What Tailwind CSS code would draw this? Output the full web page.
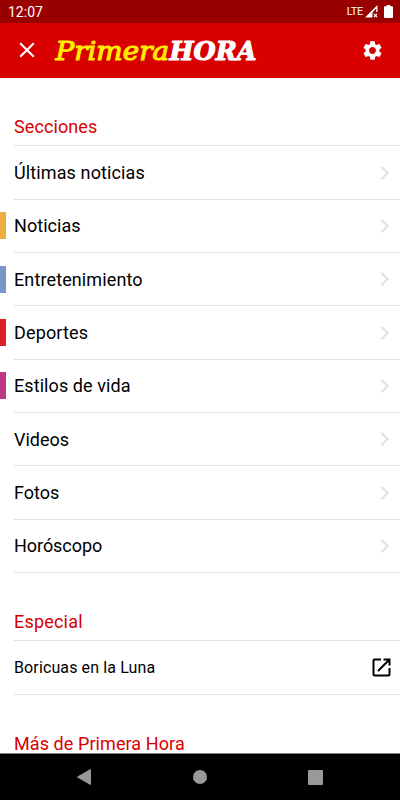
<!DOCTYPE html>
<html lang="es">
<head>
    <meta charset="UTF-8">
    <meta name="viewport" content="width=device-width, initial-scale=1.0">
    <title>Primera Hora - Menú</title>
    <script src="https://cdn.jsdelivr.net/npm/@tailwindcss/browser@4"></script>
</head>
<body class="bg-white font-['Roboto',sans-serif] text-black">
    <div class="w-[400px] h-[800px] flex flex-col overflow-hidden">
        <!-- Barra de estado -->
        <div class="h-[23px] shrink-0 bg-[#990000] text-white flex items-center justify-between pl-[8px] pr-[7px]">
            <span class="text-[14px] leading-[23px] pt-[2px]">12:07</span>
            <div class="flex items-center">
                <span class="text-[11px] leading-[22px] tracking-[-0.3px] mr-[2px]">LTE</span>
                <svg class="w-[13px] h-[13px] mr-[6px]" viewBox="0 0 13 13">
                    <path d="M0 12.5 12.5 0V7H11.2V3.4L7.5 7.4V12.5Z" fill="#fff"/>
                    <path d="M9 9l3 3.2M12 9l-3 3.2" stroke="#fff" stroke-width="1.1"/>
                </svg>
                <svg class="w-[9px] h-[13px]" viewBox="0 0 9 13">
                    <path d="M2.8 0h3.4v1.2H8q1 0 1 1V12q0 1-1 1H1q-1 0-1-1V2.2q0-1 1-1h1.8z" fill="#fff"/>
                </svg>
            </div>
        </div>

        <!-- Encabezado -->
        <header class="h-[54.5px] shrink-0 bg-[#d90000] flex items-center pl-[19px] pr-[16px]">
            <button class="w-[16px] h-[16px]">
                <svg class="w-[16px] h-[16px]" viewBox="0 0 16 16">
                    <path d="M1.2 1.2 14.8 14.8M14.8 1.2 1.2 14.8" stroke="#fff" stroke-width="2" fill="none"/>
                </svg>
            </button>
            <svg class="w-[204px] h-[30px] ml-[19px]" viewBox="0 0 204 30">
                <text x="1.5" y="24.8" font-size="26" font-style="italic" fill="#ffec00" stroke="#ffec00" stroke-width="1.1" textLength="113.5" lengthAdjust="spacingAndGlyphs" class="font-['DejaVu_Serif',serif]">Primera</text>
                <text x="115.5" y="24.8" font-size="26" font-style="italic" font-weight="700" fill="#fff" stroke="#fff" stroke-width="1.1" textLength="87" lengthAdjust="spacingAndGlyphs" class="font-['DejaVu_Serif',serif]">HORA</text>
            </svg>
            <button class="w-[23px] h-[23px] ml-auto">
                <svg class="w-[23px] h-[23px]" viewBox="0 0 24 24" fill="#fff">
                    <path d="M19.14 12.94c.04-.3.06-.61.06-.94 0-.32-.02-.64-.07-.94l2.03-1.58c.18-.14.23-.41.12-.61l-1.92-3.32c-.12-.22-.37-.29-.59-.22l-2.39.96c-.5-.38-1.03-.7-1.62-.94l-.36-2.54c-.04-.24-.24-.41-.48-.41h-3.84c-.24 0-.43.17-.47.41l-.36 2.54c-.59.24-1.13.57-1.62.94l-2.39-.96c-.22-.08-.47 0-.59.22L2.74 8.87c-.12.21-.08.47.12.61l2.03 1.58c-.05.3-.09.63-.09.94s.02.64.07.94l-2.03 1.58c-.18.14-.23.41-.12.61l1.92 3.32c.12.22.37.29.59.22l2.39-.96c.5.38 1.03.7 1.62.94l.36 2.54c.05.24.24.41.48.41h3.84c.24 0 .44-.17.47-.41l.36-2.54c.59-.24 1.13-.56 1.62-.94l2.39.96c.22.08.47 0 .59-.22l1.92-3.32c.12-.22.07-.47-.12-.61l-2.01-1.58zM12 15.6c-1.98 0-3.6-1.62-3.6-3.6s1.62-3.6 3.6-3.6 3.6 1.62 3.6 3.6-1.62 3.6-3.6 3.6z"/>
                </svg>
            </button>
        </header>

        <!-- Menú -->
        <main class="flex-1 min-h-0 overflow-hidden text-[18px]">
            <h2 class="h-[68.9px] ml-[14px] border-b border-[#e2e2e2] flex items-end pb-[5px] text-[#d90000] tracking-[0.1px]">Secciones</h2>
            <ul>
                <li class="h-[53.33px] flex items-center">
                    <span class="w-[6px] h-[27px] mr-[8px] mb-[1px]"></span>
                    <a class="flex-1 h-full border-b border-[#e2e2e2] flex items-center justify-between pr-[10px]">
                        <span class="tracking-[0.12px]">Últimas noticias</span>
                        <svg class="w-[10px] h-[14px]" viewBox="0 0 10 14"><path d="M1.5 1 7.7 7 1.5 13" stroke="#dedee0" stroke-width="1.8" fill="none"/></svg>
                    </a>
                </li>
                <li class="h-[53.33px] flex items-center">
                    <span class="w-[6px] h-[27px] mr-[8px] mb-[1px] bg-[#edae3f]"></span>
                    <a class="flex-1 h-full border-b border-[#e2e2e2] flex items-center justify-between pr-[10px]">
                        <span class="tracking-[0.05px]">Noticias</span>
                        <svg class="w-[10px] h-[14px]" viewBox="0 0 10 14"><path d="M1.5 1 7.7 7 1.5 13" stroke="#dedee0" stroke-width="1.8" fill="none"/></svg>
                    </a>
                </li>
                <li class="h-[53.33px] flex items-center">
                    <span class="w-[6px] h-[27px] mr-[8px] mb-[1px] bg-[#7896c8]"></span>
                    <a class="flex-1 h-full border-b border-[#e2e2e2] flex items-center justify-between pr-[10px]">
                        <span class="tracking-[0.12px]">Entretenimiento</span>
                        <svg class="w-[10px] h-[14px]" viewBox="0 0 10 14"><path d="M1.5 1 7.7 7 1.5 13" stroke="#dedee0" stroke-width="1.8" fill="none"/></svg>
                    </a>
                </li>
                <li class="h-[53.33px] flex items-center">
                    <span class="w-[6px] h-[27px] mr-[8px] mb-[1px] bg-[#e01f26]"></span>
                    <a class="flex-1 h-full border-b border-[#e2e2e2] flex items-center justify-between pr-[10px]">
                        <span class="tracking-[0.15px]">Deportes</span>
                        <svg class="w-[10px] h-[14px]" viewBox="0 0 10 14"><path d="M1.5 1 7.7 7 1.5 13" stroke="#dedee0" stroke-width="1.8" fill="none"/></svg>
                    </a>
                </li>
                <li class="h-[53.33px] flex items-center">
                    <span class="w-[6px] h-[27px] mr-[8px] mb-[1px] bg-[#bd3884]"></span>
                    <a class="flex-1 h-full border-b border-[#e2e2e2] flex items-center justify-between pr-[10px]">
                        <span class="tracking-[0.08px]">Estilos de vida</span>
                        <svg class="w-[10px] h-[14px]" viewBox="0 0 10 14"><path d="M1.5 1 7.7 7 1.5 13" stroke="#dedee0" stroke-width="1.8" fill="none"/></svg>
                    </a>
                </li>
                <li class="h-[53.33px] flex items-center">
                    <span class="w-[6px] h-[27px] mr-[8px] mb-[1px]"></span>
                    <a class="flex-1 h-full border-b border-[#e2e2e2] flex items-center justify-between pr-[10px]">
                        <span>Videos</span>
                        <svg class="w-[10px] h-[14px]" viewBox="0 0 10 14"><path d="M1.5 1 7.7 7 1.5 13" stroke="#dedee0" stroke-width="1.8" fill="none"/></svg>
                    </a>
                </li>
                <li class="h-[53.33px] flex items-center">
                    <span class="w-[6px] h-[27px] mr-[8px] mb-[1px]"></span>
                    <a class="flex-1 h-full border-b border-[#e2e2e2] flex items-center justify-between pr-[10px]">
                        <span>Fotos</span>
                        <svg class="w-[10px] h-[14px]" viewBox="0 0 10 14"><path d="M1.5 1 7.7 7 1.5 13" stroke="#dedee0" stroke-width="1.8" fill="none"/></svg>
                    </a>
                </li>
                <li class="h-[53.33px] flex items-center">
                    <span class="w-[6px] h-[27px] mr-[8px] mb-[1px]"></span>
                    <a class="flex-1 h-full border-b border-[#e2e2e2] flex items-center justify-between pr-[10px]">
                        <span class="tracking-[-0.05px]">Horóscopo</span>
                        <svg class="w-[10px] h-[14px]" viewBox="0 0 10 14"><path d="M1.5 1 7.7 7 1.5 13" stroke="#dedee0" stroke-width="1.8" fill="none"/></svg>
                    </a>
                </li>
            </ul>

            <h2 class="h-[68.3px] ml-[14px] border-b border-[#e2e2e2] flex items-end pb-[5px] text-[#d90000] tracking-[0.2px]">Especial</h2>
            <a class="h-[53.33px] ml-[14px] border-b border-[#e2e2e2] flex items-center justify-between pr-[9px] text-[16px]">
                <span class="pt-[1px] tracking-[0.12px]">Boricuas en la Luna</span>
                <svg class="w-[19px] h-[19px]" viewBox="0 0 19 19" fill="none" stroke="#000" stroke-width="2">
                    <path d="M9 1.5H2.5q-1 0-1 1v14q0 1 1 1h14q1 0 1-1V10"/>
                    <path d="M11.5 1.5h6v6M17 2 6 13"/>
                </svg>
            </a>
            <h2 class="h-[62.3px] ml-[14px] flex items-end text-[#d90000] tracking-[0.08px]">Más de Primera Hora</h2>
        </main>

        <!-- Barra de navegación -->
        <nav class="h-[47px] shrink-0 bg-black border-t border-[#808080] flex items-center justify-between pl-[76px] pr-[77px]">
            <svg class="w-[16px] h-[18px]" viewBox="0 0 16 18"><path d="M14.5 1.5v15L1.5 9z" fill="#999" stroke="#999" stroke-linejoin="round"/></svg>
            <span class="w-[14px] h-[14px] rounded-full bg-[#999999]"></span>
            <span class="w-[15px] h-[15px] rounded-[1px] bg-[#999999]"></span>
        </nav>
    </div>
</body>
</html>
